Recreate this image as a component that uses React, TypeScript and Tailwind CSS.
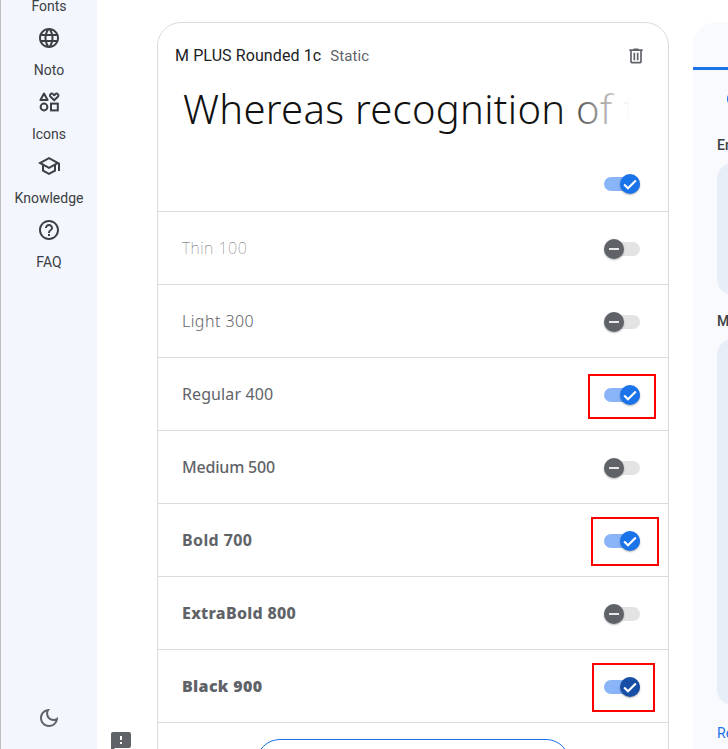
import { ReactNode } from "react";

const navItems: { label: string; icon: ReactNode }[] = [
  {
    label: "Noto",
    icon: (
      <path d="M11.99 2C6.47 2 2 6.48 2 12s4.47 10 9.99 10C17.52 22 22 17.52 22 12S17.52 2 11.99 2zm6.93 6h-2.95c-.32-1.25-.78-2.45-1.38-3.56 1.84.63 3.37 1.91 4.33 3.56zM12 4.04c.83 1.2 1.48 2.53 1.91 3.96h-3.82c.43-1.43 1.08-2.76 1.91-3.96zM4.26 14C4.1 13.36 4 12.69 4 12s.1-1.36.26-2h3.38c-.08.66-.14 1.32-.14 2 0 .68.06 1.34.14 2H4.26zm.82 2h2.95c.32 1.25.78 2.45 1.38 3.56-1.84-.63-3.37-1.9-4.33-3.56zm2.95-8H5.08c.96-1.66 2.49-2.93 4.33-3.56C8.81 5.55 8.35 6.75 8.03 8zM12 19.96c-.83-1.2-1.48-2.53-1.91-3.96h3.82c-.43 1.43-1.08 2.76-1.91 3.96zM14.34 14H9.66c-.09-.66-.16-1.32-.16-2 0-.68.07-1.35.16-2h4.68c.09.65.16 1.32.16 2 0 .68-.07 1.34-.16 2zm.25 5.56c.6-1.11 1.06-2.31 1.38-3.56h2.95c-.96 1.65-2.49 2.93-4.33 3.56zM16.36 14c.08-.66.14-1.32.14-2 0-.68-.06-1.34-.14-2h3.38c.16.64.26 1.31.26 2s-.1 1.36-.26 2h-3.38z" />
    ),
  },
  {
    label: "Icons",
    icon: (
      <g fill="none" stroke="currentColor" strokeWidth="2">
        <path d="M7 3.6 10.6 10H3.4Z" strokeLinejoin="round" />
        <path d="M17.2 10.2 13.6 6.8c-1.9-1.9.9-4.4 2.5-2.6l1.1 1.1 1.1-1.1c1.6-1.8 4.4.7 2.5 2.6Z" strokeLinejoin="round" />
        <circle cx="7" cy="17" r="3.4" />
        <rect x="14" y="13.6" width="6.8" height="6.8" />
      </g>
    ),
  },
  {
    label: "Knowledge",
    icon: <path d="M12 3L1 9l4 2.18v6L12 21l7-3.82v-6l2-1.09V17h2V9L12 3zm6.82 6L12 12.72 5.18 9 12 5.28 18.82 9zM17 15.99l-5 2.73-5-2.73v-3.72L12 15l5-2.73v3.72z" />,
  },
  {
    label: "FAQ",
    icon: <path d="M11 18h2v-2h-2v2zm1-16C6.48 2 2 6.48 2 12s4.48 10 10 10 10-4.48 10-10S17.52 2 12 2zm0 18c-4.41 0-8-3.59-8-8s3.59-8 8-8 8 3.59 8 8-3.59 8-8 8zm0-14c-2.21 0-4 1.79-4 4h2c0-1.1.9-2 2-2s2 .9 2 2c0 2-3 1.75-3 5h2c0-2.25 3-2.5 3-5 0-2.21-1.79-4-4-4z" />,
  },
];

function Toggle({ on, dark }: { on: boolean; dark?: boolean }) {
  return (
    <div className={`relative h-[14px] w-9 rounded-full ${on ? "bg-[#8ab4f8]" : "bg-[#e3e3e3]"}`}>
      <div
        className={`absolute top-[-3px] flex h-5 w-5 items-center justify-center rounded-full shadow-[0_1px_2px_rgba(0,0,0,0.3)] ${
          on ? "right-0" : "left-0"
        } ${on ? (dark ? "bg-[#174ea6]" : "bg-[#1a73e8]") : "bg-[#5f6368]"}`}
      >
        {on ? (
          <svg viewBox="0 0 24 24" className="h-5 w-5 fill-none stroke-white stroke-[2.6]">
            <path d="M5 12.5l4.6 4.6L19 7.8" />
          </svg>
        ) : (
          <div className="h-[2px] w-[10px] bg-[#e8e8e8]" />
        )}
      </div>
    </div>
  );
}

const rows = [
  { label: "Thin 100", cls: "font-thin tracking-[0.5px] text-[#5f6368]", on: false },
  { label: "Light 300", cls: "font-light tracking-[0.45px] text-[#5f6368]", on: false },
  { label: "Regular 400", cls: "font-normal tracking-[0.1px] text-[#5f6368]", on: true, box: "left-[-16px] top-[-14px] h-[45px] w-[68px]" },
  { label: "Medium 500", cls: "font-medium tracking-[-0.2px] text-[#5f6368]", on: false },
  { label: "Bold 700", cls: "font-bold tracking-[0.4px] text-[#5f6368]", on: true, box: "left-[-13px] top-[-17px] h-[49px] w-[68px]" },
  { label: "ExtraBold 800", cls: "font-extrabold tracking-[0.3px] text-[#5f6368]", on: false },
  { label: "Black 900", cls: "font-black tracking-[0.33px] text-[#5f6368]", on: true, dark: true, box: "left-[-12px] top-[-17px] h-[49px] w-[63px]" },
];

export default function App() {
  return (
    <div className="flex h-[749px] w-[728px] overflow-hidden bg-white font-['Inter',sans-serif] text-[#3c4043]">
      <aside className="flex w-[97px] shrink-0 flex-col items-center border-l border-[#bdbdbd] bg-[#f3f6fc]">
        <div className="mt-[-2px] h-4 text-[14px] leading-4 font-['Roboto',sans-serif]">Fonts</div>
        <nav className="mt-[12px] flex flex-col items-center">
          {navItems.map((item) => (
            <div key={item.label} className="flex h-16 w-24 flex-col items-center">
              <svg viewBox="0 0 24 24" className="h-6 w-6 shrink-0 fill-current">
                {item.icon}
              </svg>
              <span className="mt-[11px] text-[14px] leading-[18px] font-['Roboto',sans-serif]">{item.label}</span>
            </div>
          ))}
        </nav>
        <svg viewBox="0 0 24 24" className="mt-auto mb-[19px] h-6 w-6 fill-[#5f6368]">
          <path d="M9.37 5.51c-.18.64-.27 1.31-.27 1.99 0 4.08 3.32 7.4 7.4 7.4.68 0 1.35-.09 1.99-.27C17.45 17.19 14.93 19 12 19c-3.86 0-7-3.14-7-7 0-2.93 1.81-5.45 4.37-6.49zM12 3c-4.97 0-9 4.03-9 9s4.03 9 9 9 9-4.03 9-9c0-.46-.04-.92-.1-1.36-.98 1.37-2.58 2.26-4.4 2.26-2.98 0-5.4-2.42-5.4-5.4 0-1.81.89-3.42 2.26-4.4-.44-.06-.9-.1-1.36-.1z" />
        </svg>
      </aside>

      <div className="flex items-end w-[60px] shrink-0 justify-center">
        <svg viewBox="0 0 24 24" className="ml-[-12px] mb-[-5px] h-6 w-6 fill-[#5f6368]">
          <path d="M20 2H4c-1.1 0-1.99.9-1.99 2L2 22l4-4h14c1.1 0 2-.9 2-2V4c0-1.1-.9-2-2-2zm-7 12h-2v-2h2v2zm0-4h-2V6h2v4z" />
        </svg>
      </div>

      <main className="flex shrink-0 gap-6 pt-[22px]">
        <section className="h-[800px] w-[512px] shrink-0 rounded-t-3xl border border-[#dadce0]">
          <div className="flex h-[189px] flex-col border-b border-[#dadce0] pb-5">
            <div className="flex items-center justify-between pt-[21px] pr-[22px] pl-[17px]">
              <div className="flex items-baseline gap-[9px]">
                <span className="text-[16px] leading-6 tracking-[0.1px] text-[#202124] font-['Roboto',sans-serif]">M PLUS Rounded 1c</span>
                <span className="text-[15px] leading-6 tracking-[0.1px] text-[#5f6368] font-['Roboto',sans-serif]">Static</span>
              </div>
              <svg viewBox="0 0 24 24" className="h-5 w-5 fill-[#5f6368]">
                <path d="M7 21q-.825 0-1.413-.587Q5 19.825 5 19V6H4V4h5V3h6v1h5v2h-1v13q0 .825-.587 1.413Q17.825 21 17 21ZM17 6H7v13h10ZM9 17h2V8H9Zm4 0h2V8h-2ZM7 6v13Z" />
              </svg>
            </div>
            <div className="relative mt-[14px] mr-[26px] ml-[25px] overflow-hidden">
              <div className="text-[40px] leading-[54px] font-light tracking-[0.3px] whitespace-nowrap text-[#111111] font-['Noto_Sans',sans-serif]">
                Whereas recognition of the inherent
              </div>
              <div className="absolute inset-y-0 right-0 w-[85px] bg-gradient-to-r from-transparent to-white to-85%" />
            </div>
            <div className="mt-auto flex justify-end pr-7">
              <Toggle on />
            </div>
          </div>
          {rows.map((row) => (
            <div key={row.label} className="flex h-[73px] items-center justify-between border-b border-[#dadce0] pr-7 pl-6">
              <span className={`text-[16px] font-['Noto_Sans',sans-serif] ${row.cls}`}>{row.label}</span>
              <div className="relative mt-[2px]">
                <Toggle on={row.on} dark={row.dark} />
                {row.box && <div className={`absolute border-2 border-[#ff0000] ${row.box}`} />}
              </div>
            </div>
          ))}
          <div className="mx-auto mt-[16px] h-12 w-[314px] rounded-full border border-[#1a73e8]" />
        </section>

        <section className="h-[800px] w-[300px] shrink-0 rounded-t-3xl bg-[#f8fafd]">
          <div className="h-[48px] border-b-[3px] border-[#1a73e8]" />
          <div className="pl-6">
            <div className="mt-[21px] ml-[10px] h-4 w-4 rounded-full border-2 border-[#1a73e8]" />
            <div className="mt-[28px] text-[14px] leading-5 font-medium text-[#3c4043] font-['Roboto',sans-serif]">English</div>
            <div className="mt-2 h-[132px] rounded-l-2xl bg-[#e8eef8]" />
            <div className="mt-[16px] text-[14px] leading-5 font-medium text-[#3c4043] font-['Roboto',sans-serif]">Mode</div>
            <div className="mt-2 h-[366px] rounded-l-2xl bg-[#e8eef8]" />
            <div className="mt-[18px] text-[14px] leading-5 text-[#1a73e8] font-['Roboto',sans-serif]">Reset</div>
          </div>
        </section>
      </main>
    </div>
  );
}
